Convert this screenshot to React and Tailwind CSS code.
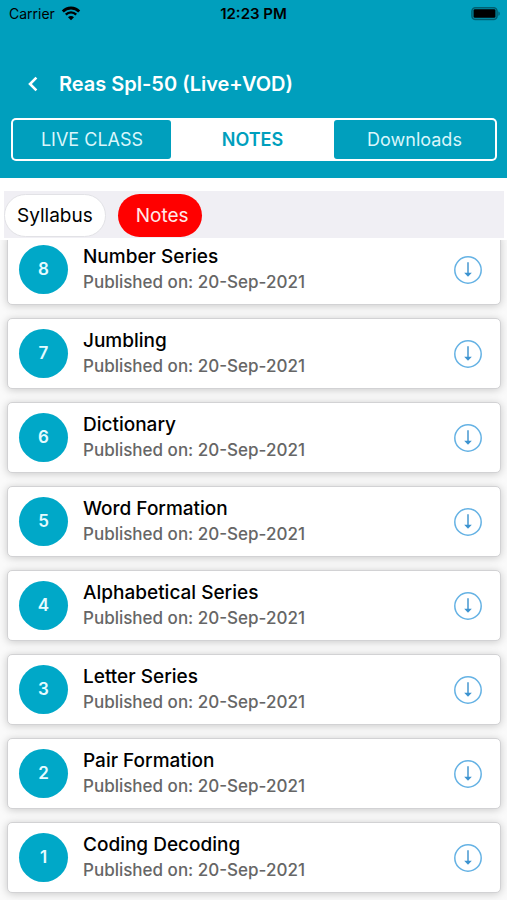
import React from "react";

const tabs = ["LIVE CLASS", "NOTES", "Downloads"];

const notes = [
  { id: 8, title: "Number Series", date: "20-Sep-2021" },
  { id: 7, title: "Jumbling", date: "20-Sep-2021" },
  { id: 6, title: "Dictionary", date: "20-Sep-2021" },
  { id: 5, title: "Word Formation", date: "20-Sep-2021" },
  { id: 4, title: "Alphabetical Series", date: "20-Sep-2021" },
  { id: 3, title: "Letter Series", date: "20-Sep-2021" },
  { id: 2, title: "Pair Formation", date: "20-Sep-2021" },
  { id: 1, title: "Coding Decoding", date: "20-Sep-2021" },
];

const WifiIcon = () => (
  <svg className="w-5 h-4" viewBox="0 0 20 16" fill="none" stroke="black">
    <path d="M1.8 5.4a11.6 11.6 0 0 1 16.4 0" strokeWidth="2.8" />
    <path d="M4.8 8.6a7.3 7.3 0 0 1 10.4 0" strokeWidth="2.4" />
    <path d="M10 14.2 7 11.2a4.2 4.2 0 0 1 6 0Z" fill="black" stroke="none" />
  </svg>
);

const BatteryIcon = () => (
  <svg className="w-[30px] h-[14px]" viewBox="0 0 30 14">
    <rect x="0.8" y="0.6" width="25.4" height="12" rx="3.6" fill="black" fillOpacity="0.15" stroke="black" strokeOpacity="0.35" strokeWidth="1.4" />
    <rect x="2.6" y="2.2" width="21.8" height="8.6" rx="1.4" fill="black" />
    <path d="M27.4 4.4c1.8.6 1.8 3.8 0 4.4Z" fill="black" fillOpacity="0.4" />
  </svg>
);

const DownloadIcon = () => (
  <svg className="w-7 h-7" viewBox="0 0 28 28" fill="none">
    <circle cx="14" cy="14" r="13.2" stroke="#65b2e4" strokeWidth="1.5" />
    <path d="M14 6.2v12" stroke="#65a9d8" strokeWidth="1.8" />
    <path d="M10.2 16.8h7.6L14 20.8Z" fill="#3c93d0" />
  </svg>
);

const StatusBar = () => (
  <div className="grid grid-cols-3 items-center h-7 px-[9px] text-black">
    <div className="flex items-center gap-[6px] text-sm">
      <span>Carrier</span>
      <WifiIcon />
    </div>
    <span className="text-center text-[15px] font-semibold">12:23 PM</span>
    <div className="flex justify-end -mr-[3px]">
      <BatteryIcon />
    </div>
  </div>
);

const Header = () => (
  <header className="shrink-0 bg-[#009fbd] pb-[17px]">
    <StatusBar />
    <div className="flex items-center h-14 mt-7 mb-[6px] pl-[26px] gap-[19px] text-white">
      <button type="button" aria-label="Back">
        <svg className="w-[14px] h-4" viewBox="0 0 14 16" fill="none" stroke="white" strokeWidth="2.6">
          <path d="M10.4 1.6 4 8l6.4 6.4" />
        </svg>
      </button>
      <h1 className="text-xl font-semibold">Reas Spl-50 (Live+VOD)</h1>
    </div>
    <nav className="grid grid-cols-[158fr_163fr_161fr] ml-[11px] mr-[10px] h-[43px] p-[2px] bg-white rounded-[5px] text-lg">
      {tabs.map((tab) => (
        <button
          key={tab}
          type="button"
          className={
            tab === "NOTES"
              ? "bg-white text-[#009fbd] font-semibold"
              : "bg-[#009fbd] text-[#d9f6fb] rounded-[3px]"
          }
        >
          {tab}
        </button>
      ))}
    </nav>
  </header>
);

const NoteCard = ({ note }) => (
  <li className="flex items-center h-[71px] pl-[11px] pr-[18px] bg-white border border-[#d2d2d4] rounded-[5px] shadow-[0_1px_8px_rgba(0,0,0,0.2)]">
    <span className="flex items-center justify-center w-[49px] h-[49px] rounded-full bg-[#00a8c8] text-[#e6fbff] text-[17px] font-semibold">
      {note.id}
    </span>
    <div className="flex-1 ml-[15px]">
      <h2 className="text-[19px] leading-[26px] font-medium text-black">{note.title}</h2>
      <p className="text-[17px] leading-[25px] font-medium text-[#666666]">Published on: {note.date}</p>
    </div>
    <button type="button" aria-label={`Download ${note.title}`}>
      <DownloadIcon />
    </button>
  </li>
);

const App = () => {
  return (
    <div className="flex flex-col h-screen overflow-hidden bg-white font-['Inter',sans-serif]">
      <Header />

      {/* Filter chips */}
      <div className="flex shrink-0 items-end gap-3 mt-[13px] ml-1 mr-[3px] h-[47px] pb-px bg-[#f0eff4] text-[19px]">
        <button type="button" className="h-[43px] px-3 pt-[2px] rounded-full bg-white border border-[#e2e2e6] text-black">
          Syllabus
        </button>
        <button type="button" className="h-[43px] pl-[18px] pr-[13px] pt-[2px] rounded-full bg-[#ff0000] text-[#ffe9e9]">
          Notes
        </button>
      </div>

      {/* List is scrolled a little, so the first card is cut off */}
      <main className="flex-1 min-h-0 mt-[2px] overflow-hidden bg-[#fafafa]">
        <ul className="flex flex-col gap-[13px] -mt-[6px] pl-[7px] pr-[6px]">
          {notes.map((note) => (
            <NoteCard key={note.id} note={note} />
          ))}
        </ul>
      </main>
    </div>
  );
};

export default App;
